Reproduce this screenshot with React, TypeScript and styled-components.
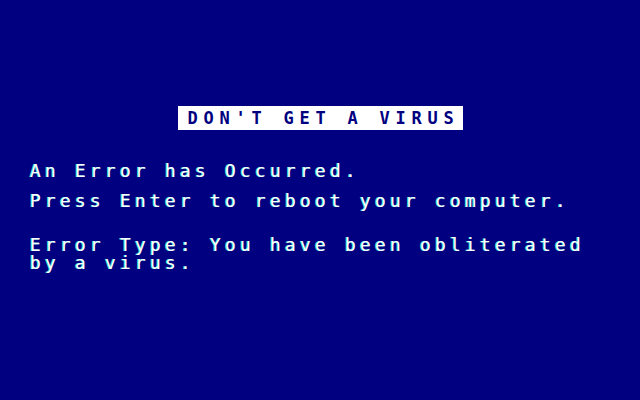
import React from "react";
import styled, { createGlobalStyle } from "styled-components";

const Global = createGlobalStyle`
  html, body {
    margin: 0;
    padding: 0;
    background: #000080;
  }
  body {
    font-family: "DejaVu Sans Mono", "Liberation Mono", monospace;
  }
`;

const Screen = styled.div`
  width: 640px;
  height: 400px;
  box-sizing: border-box;
  background: #000080;
  padding-top: 106px;
  overflow: hidden;
  display: flex;
  flex-direction: column;
`;

const TitleRow = styled.div`
  display: flex;
  justify-content: center;
  padding-left: 1px;
`;

const Title = styled.div`
  background: #ffffff;
  color: #000080;
  font-family: "DejaVu Sans Mono", monospace;
  font-weight: bold;
  font-size: 17px;
  letter-spacing: 5.77px;
  height: 24px;
  line-height: 24px;
  padding: 0 3px 0 9px;
  white-space: pre;
`;

const Body = styled.div`
  padding-left: 30px;
  margin-top: 32px;
  display: flex;
  flex-direction: column;
`;

const Line = styled.div<{ $gap?: number }>`
  color: #ffffff;
  font-family: "DejaVu Sans Mono", monospace;
  font-size: 18px;
  letter-spacing: 4.16px;
  line-height: 18px;
  height: 18px;
  white-space: pre;
  margin-top: ${(p) => p.$gap ?? 0}px;
  text-shadow: -1px 0 #3fe0c8;
`;

export default function App() {
  return (
    <>
      <Global />
      <Screen>
        <TitleRow>
          <Title>DON'T GET A VIRUS</Title>
        </TitleRow>
        <Body>
          <Line>An Error has Occurred.</Line>
          <Line $gap={12}>Press Enter to reboot your computer.</Line>
          <Line $gap={26}>Error Type: You have been obliterated</Line>
          <Line>by a virus.</Line>
        </Body>
      </Screen>
    </>
  );
}
